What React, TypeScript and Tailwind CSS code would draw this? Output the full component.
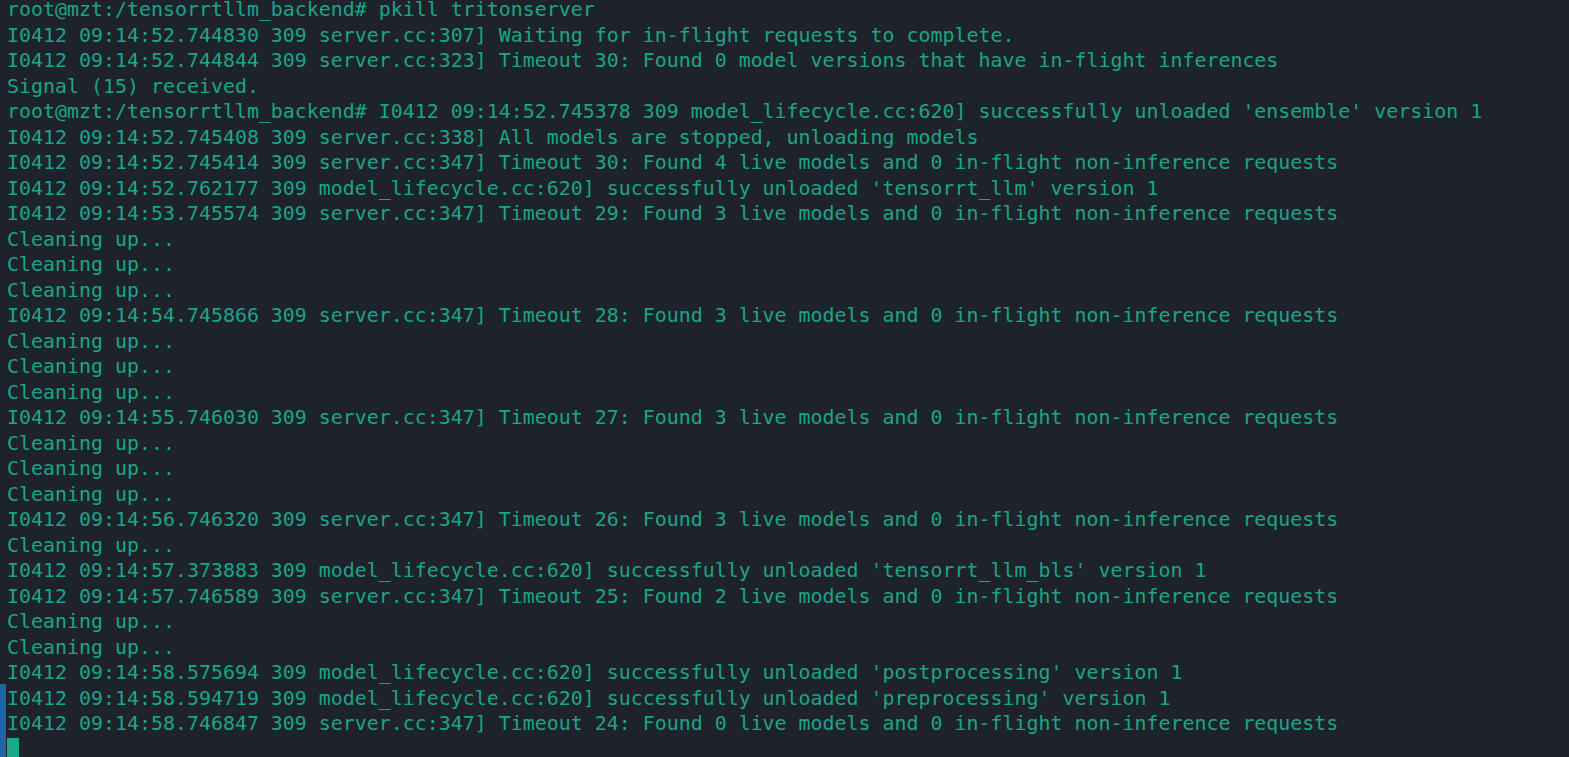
const lines: string[] = [
  "root@mzt:/tensorrtllm_backend# pkill tritonserver",
  "I0412 09:14:52.744830 309 server.cc:307] Waiting for in-flight requests to complete.",
  "I0412 09:14:52.744844 309 server.cc:323] Timeout 30: Found 0 model versions that have in-flight inferences",
  "Signal (15) received.",
  "root@mzt:/tensorrtllm_backend# I0412 09:14:52.745378 309 model_lifecycle.cc:620] successfully unloaded 'ensemble' version 1",
  "I0412 09:14:52.745408 309 server.cc:338] All models are stopped, unloading models",
  "I0412 09:14:52.745414 309 server.cc:347] Timeout 30: Found 4 live models and 0 in-flight non-inference requests",
  "I0412 09:14:52.762177 309 model_lifecycle.cc:620] successfully unloaded 'tensorrt_llm' version 1",
  "I0412 09:14:53.745574 309 server.cc:347] Timeout 29: Found 3 live models and 0 in-flight non-inference requests",
  "Cleaning up...",
  "Cleaning up...",
  "Cleaning up...",
  "I0412 09:14:54.745866 309 server.cc:347] Timeout 28: Found 3 live models and 0 in-flight non-inference requests",
  "Cleaning up...",
  "Cleaning up...",
  "Cleaning up...",
  "I0412 09:14:55.746030 309 server.cc:347] Timeout 27: Found 3 live models and 0 in-flight non-inference requests",
  "Cleaning up...",
  "Cleaning up...",
  "Cleaning up...",
  "I0412 09:14:56.746320 309 server.cc:347] Timeout 26: Found 3 live models and 0 in-flight non-inference requests",
  "Cleaning up...",
  "I0412 09:14:57.373883 309 model_lifecycle.cc:620] successfully unloaded 'tensorrt_llm_bls' version 1",
  "I0412 09:14:57.746589 309 server.cc:347] Timeout 25: Found 2 live models and 0 in-flight non-inference requests",
  "Cleaning up...",
  "Cleaning up...",
  "I0412 09:14:58.575694 309 model_lifecycle.cc:620] successfully unloaded 'postprocessing' version 1",
  "I0412 09:14:58.594719 309 model_lifecycle.cc:620] successfully unloaded 'preprocessing' version 1",
  "I0412 09:14:58.746847 309 server.cc:347] Timeout 24: Found 0 live models and 0 in-flight non-inference requests",
];

const App = () => {
  return (
    <div className="h-[757px] w-full overflow-hidden bg-[#1e222a] flex">
      {/* scrollbar marker on the left edge */}
      <div className="w-[6px] shrink-0 flex flex-col">
        <div className="h-[684px]" />
        <div className="flex-1 bg-[#2266a0]" />
      </div>
      <div className="flex-1 -mt-[3px] pl-[1px] font-['DejaVu_Sans_Mono',monospace] text-[19.93px] leading-[25.5px] text-[#19a589] whitespace-pre">
        {lines.map((line, i) => (
          <div key={i}>{line}</div>
        ))}
        <div className="w-[12px] h-[20px] mt-[1.5px] bg-[#1aa88a]" />
      </div>
    </div>
  );
};

export default App;
